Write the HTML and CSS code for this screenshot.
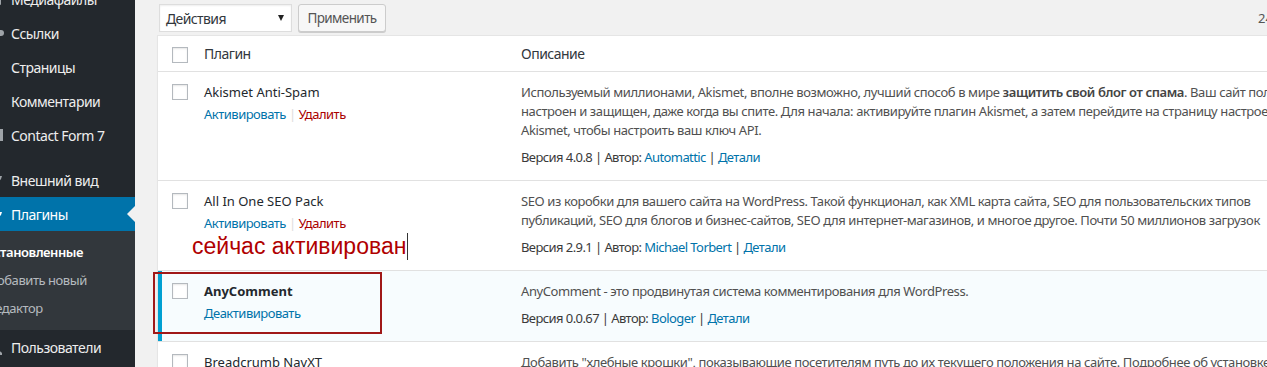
FILE: index.html
```html
<!DOCTYPE html>
<html lang="ru">
<head>
<meta charset="utf-8">
<title>Плагины</title>
<link rel="stylesheet" href="styles.css">
</head>
<body>
<div class="admin">
  <nav class="sidebar">
    <ul class="menu">
      <li class="mi"><span class="ico"><svg viewBox="0 0 20 20"><rect x="3" y="4" width="14" height="12" rx="1"/></svg></span><span class="lbl">Медиафайлы</span></li>
      <li class="mi"><span class="ico"><svg viewBox="0 0 20 20"><circle cx="17" cy="10" r="3"/></svg></span><span class="lbl">Ссылки</span></li>
      <li class="mi"><span class="ico"><svg viewBox="0 0 20 20"><rect x="4" y="3" width="8" height="14"/></svg></span><span class="lbl">Страницы</span></li>
      <li class="mi"><span class="ico"><svg viewBox="0 0 20 20"><rect x="3" y="4" width="10" height="10"/></svg></span><span class="lbl">Комментарии</span></li>
      <li class="mi"><span class="ico"><svg viewBox="0 0 20 20"><rect x="3" y="4" width="16" height="12"/></svg></span><span class="lbl">Contact Form 7</span></li>
      <li class="sep"></li>
      <li class="mi"><span class="ico"><svg viewBox="0 0 20 20"><path d="M6 6 L18 6 L17 9 L13 14 L10 9 Z"/></svg></span><span class="lbl">Внешний вид</span></li>
      <li class="mi current"><span class="ico"><svg viewBox="0 0 20 20"><path d="M10 8 L18 8 L17 11 L13 15 L11 11 Z"/></svg></span><span class="lbl">Плагины</span><span class="pointer"></span></li>
      <li class="submenu">
        <ul>
          <li class="sub cur"><span class="lbl">Установленные</span></li>
          <li class="sub"><span class="lbl">Добавить новый</span></li>
          <li class="sub"><span class="lbl">Редактор</span></li>
        </ul>
      </li>
      <li class="mi"><span class="ico"><svg viewBox="0 0 20 20"><path d="M6 16 Q10 8 18 16 L18 18 L6 18 Z"/></svg></span><span class="lbl">Пользователи</span></li>
    </ul>
  </nav>

  <main class="content">
    <div class="tablenav">
      <div class="select"><span>Действия</span><span class="caret"></span></div>
      <div class="btn">Применить</div>
      <span class="count">24 элемента</span>
    </div>

    <div class="plugins">
      <div class="row head">
        <div class="c-check"><span class="cb"></span></div>
        <div class="c-name">Плагин</div>
        <div class="c-desc">Описание</div>
      </div>

      <div class="row">
        <div class="c-check"><span class="cb"></span></div>
        <div class="c-name">
          <div class="title">Akismet Anti-Spam</div>
          <div class="actions"><a class="lnk">Активировать</a><span class="bar">|</span><a class="del">Удалить</a></div>
        </div>
        <div class="c-desc">
          <div class="desc">Используемый миллионами, Akismet, вполне возможно, лучший способ в мире <b>защитить свой блог от спама</b>. Ваш сайт полностью<br>настроен и защищен, даже когда вы спите. Для начала: активируйте плагин Akismet, а затем перейдите на страницу настроек<br>Akismet, чтобы настроить ваш ключ API.</div>
          <div class="ver">Версия 4.0.8 | Автор: <a class="lnk">Automattic</a> | <a class="lnk">Детали</a></div>
        </div>
      </div>

      <div class="row">
        <div class="c-check"><span class="cb"></span></div>
        <div class="c-name">
          <div class="title">All In One SEO Pack</div>
          <div class="actions"><a class="lnk">Активировать</a><span class="bar">|</span><a class="del">Удалить</a></div>
          <div class="note"><span class="note-text">сейчас активирован</span><span class="caret-line"></span></div>
        </div>
        <div class="c-desc">
          <div class="desc">SEO из коробки для вашего сайта на WordPress. Такой функционал, как XML карта сайта, SEO для пользовательских типов<br>публикаций, SEO для блогов и бизнес-сайтов, SEO для интернет-магазинов, и многое другое. Почти 50 миллионов загрузок</div>
          <div class="ver">Версия 2.9.1 | Автор: <a class="lnk">Michael Torbert</a> | <a class="lnk">Детали</a></div>
        </div>
      </div>

      <div class="row active">
        <div class="c-check"><span class="cb"></span></div>
        <div class="c-name">
          <div class="title strong">AnyComment</div>
          <div class="actions"><a class="lnk">Деактивировать</a></div>
        </div>
        <div class="c-desc">
          <div class="desc">AnyComment - это продвинутая система комментирования для WordPress.</div>
          <div class="ver">Версия 0.0.67 | Автор: <a class="lnk">Bologer</a> | <a class="lnk">Детали</a></div>
        </div>
        <div class="redbox"></div>
      </div>

      <div class="row">
        <div class="c-check"><span class="cb"></span></div>
        <div class="c-name">
          <div class="title">Breadcrumb NavXT</div>
        </div>
        <div class="c-desc">
          <div class="desc">Добавить "хлебные крошки", показывающие посетителям путь до их текущего положения на сайте. Подробнее об установке и использовании</div>
        </div>
      </div>
    </div>
  </main>
</div>
</body>
</html>
```

FILE: styles.css
```css
html, body {
  margin: 0;
  padding: 0;
}
body {
  background: #f1f1f1;
  font-family: "Noto Sans", "Open Sans", sans-serif;
  color: #444;
  width: 1267px;
  height: 367px;
  overflow: hidden;
}
.admin {
  display: flex;
  align-items: stretch;
  width: 1420px;
  height: 367px;
}
.sidebar {
  width: 135px;
  flex: none;
  background: #23282d;
  overflow: hidden;
}
.menu {
  list-style: none;
  margin: -18px 0 0;
  padding: 0;
}
.mi {
  height: 34px;
  display: flex;
  align-items: center;
  font-size: 14px;
  letter-spacing: -0.5px;
  color: #eee;
  position: relative;
  white-space: nowrap;
}
.ico {
  width: 20px;
  height: 20px;
  flex: none;
  margin-left: -16px;
  margin-right: 7px;
}
.ico svg {
  width: 20px;
  height: 20px;
  display: block;
  fill: rgba(240, 245, 250, 0.6);
}
.sep {
  height: 11px;
}
.mi.current {
  background: #0073aa;
  color: #fff;
}
.mi.current .ico svg {
  fill: #fff;
}
.pointer {
  position: absolute;
  right: 0;
  top: 50%;
  margin-top: -8px;
  border: 8px solid transparent;
  border-right-color: #f1f1f1;
  border-left-width: 0;
}
.submenu {
  background: #32373c;
  padding: 7px 0 8px;
}
.submenu ul {
  list-style: none;
  margin: 0;
  padding: 0;
}
.sub {
  height: 28px;
  display: flex;
  align-items: center;
  font-size: 13px;
  letter-spacing: -0.45px;
  color: rgba(240, 245, 250, 0.7);
  white-space: nowrap;
}
.sub .lbl {
  margin-left: -12px;
}
.sub.cur {
  color: #fff;
  font-weight: 600;
}
.sub.cur .lbl {
  margin-left: -13px;
}

.content {
  flex: none;
  width: 1260px;
  padding-left: 22px;
}
.tablenav {
  height: 35px;
  box-sizing: border-box;
  padding-top: 4px;
  display: flex;
  align-items: flex-start;
}
.select {
  margin-left: 2px;
  width: 133px;
  height: 28px;
  box-sizing: border-box;
  border: 1px solid #ddd;
  background: #fff;
  box-shadow: inset 0 1px 2px rgba(0, 0, 0, 0.07);
  display: flex;
  align-items: center;
  justify-content: space-between;
  padding: 0 7px 0 6px;
  font-size: 14px;
  letter-spacing: -0.6px;
  color: #32373c;
}
.caret {
  width: 0;
  height: 0;
  border-left: 3.5px solid transparent;
  border-right: 3.5px solid transparent;
  border-top: 6px solid #222;
}
.btn {
  margin-left: 6px;
  width: 88px;
  height: 28px;
  box-sizing: border-box;
  border: 1px solid #ccc;
  border-radius: 3px;
  background: #f7f7f7;
  box-shadow: 0 1px 0 #ccc;
  font-size: 13.5px;
  letter-spacing: -0.6px;
  color: #555;
  display: flex;
  align-items: center;
  justify-content: center;
}
.count {
  margin-left: 872px;
  font-size: 13px;
  color: #555;
  line-height: 28px;
  white-space: nowrap;
}

.plugins {
  background: #fff;
  border: 1px solid #e5e5e5;
  box-shadow: 0 1px 1px rgba(0, 0, 0, 0.04);
}
.row {
  display: flex;
  position: relative;
  border-top: 1px solid #e1e1e1;
}
.row.head {
  border-top: 0;
  border-bottom: 1px solid #e1e1e1;
}
.row.head + .row {
  border-top: 0;
}
.c-check {
  width: 36px;
  flex: none;
  box-sizing: border-box;
  padding: 12px 0 0 14px;
}
.head .c-check {
  padding-top: 11px;
}
.cb {
  display: block;
  width: 16px;
  height: 16px;
  box-sizing: border-box;
  border: 1px solid #b4b9be;
  background: #fff;
  box-shadow: inset 0 1px 2px rgba(0, 0, 0, 0.1);
}
.c-name {
  width: 317px;
  flex: none;
  box-sizing: border-box;
  padding: 11px 10px 13px;
  font-size: 13px;
  line-height: 19px;
  position: relative;
}
.c-desc {
  flex: 1;
  padding: 11px 10px 13px;
  font-size: 13px;
  line-height: 19px;
  white-space: nowrap;
}
.head .c-name,
.head .c-desc {
  padding: 8px 10px;
  font-size: 14px;
  letter-spacing: -0.5px;
  color: #32373c;
}
.title {
  color: #23282d;
}
.title.strong {
  font-weight: 700;
}
.actions {
  padding-top: 3px;
  letter-spacing: -0.5px;
}
.lnk {
  color: #0073aa;
}
.del {
  color: #a00;
}
.bar {
  color: #ddd;
  margin: 0 3px;
}
.desc {
  color: #505050;
  letter-spacing: -0.4px;
}
.desc b {
  font-weight: 600;
  color: #444;
}
.ver {
  margin-top: 8px;
  color: #3a3a3a;
  letter-spacing: -0.58px;
}
.row.active {
  background: #f7fcfe;
}
.row.active .c-check {
  box-shadow: inset 4px 0 0 #00a0d2;
}
.note {
  position: absolute;
  left: -2px;
  top: 52px;
  display: flex;
  align-items: stretch;
  height: 27px;
}
.note-text {
  font-family: "Liberation Sans", Arial, sans-serif;
  font-size: 23px;
  line-height: 27px;
  color: #b00000;
  white-space: nowrap;
}
.caret-line {
  width: 1px;
  margin-left: 1px;
  background: #333;
}
.redbox {
  position: absolute;
  left: -5px;
  top: 1px;
  width: 229px;
  height: 62px;
  box-sizing: border-box;
  border: 2px solid #a01818;
}
```
